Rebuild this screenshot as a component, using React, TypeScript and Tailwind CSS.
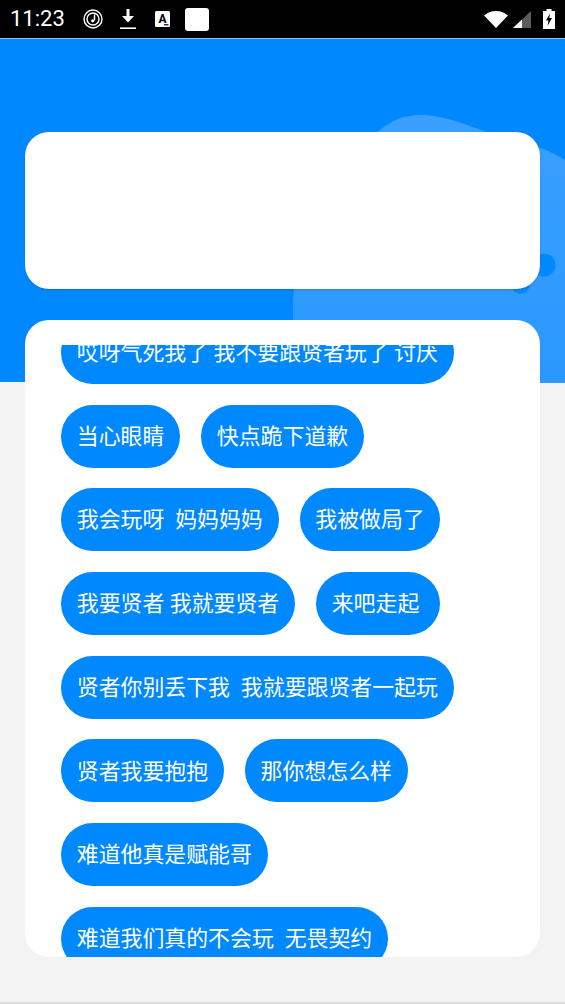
import React from 'react';

const chips = [
  '哎呀气死我了 我不要跟贤者玩了 讨厌',
  '当心眼睛',
  '快点跪下道歉',
  '我会玩呀  妈妈妈妈',
  '我被做局了',
  '我要贤者 我就要贤者',
  '来吧走起 ',
  '贤者你别丢下我  我就要跟贤者一起玩',
  '贤者我要抱抱',
  '那你想怎么样',
  '难道他真是赋能哥',
  '难道我们真的不会玩  无畏契约',
];

const StatusBar = () => (
  <div className="h-[38px] shrink-0 bg-black flex items-center text-white relative">
    <span className="ml-[10px] w-[54px] text-[22px] leading-none font-['Roboto',sans-serif]">11:23</span>
    <svg className="ml-[19px]" width="20" height="20" viewBox="0 0 20 20" fill="none" stroke="white">
      <circle cx="10" cy="10" r="9" strokeWidth="1.4" />
      <circle cx="10" cy="10" r="6" strokeWidth="1.4" />
      <path d="M11.5 5.5v6" strokeWidth="1.5" />
      <circle cx="9.7" cy="11.8" r="1.6" fill="white" stroke="none" />
    </svg>
    <svg className="ml-[17px]" width="16" height="20" viewBox="0 0 16 20" fill="white">
      <path d="M6.5 0h3v7H14l-6 6.5L2 7h4.500z" />
      <rect x="0" y="18.400" width="16" height="1.600" />
    </svg>
    <svg className="ml-[19px]" width="15" height="16" viewBox="0 0 15 16">
      <rect width="15" height="16" rx="1.500" fill="white" />
      <text x="7.500" y="11.500" textAnchor="middle" fontSize="12" fontWeight="700" fontFamily="Roboto, sans-serif" fill="black">A</text>
      <rect x="9" y="13.200" width="4.500" height="1.200" fill="black" />
    </svg>
    <div className="ml-[15px] w-[24px] h-[23px] bg-white rounded-[3px]"></div>
    <div className="ml-auto flex items-center mr-[10px]">
      <svg width="24" height="17" viewBox="0 0 24 17" fill="white">
        <path d="M0 4.600C3 1.800 7.200 0 12 0s9 1.800 12 4.600L12 17z" />
      </svg>
      <svg className="ml-[5px]" width="18" height="17" viewBox="0 0 18 17">
        <path d="M18 0v17H0z" fill="#5c5c5c" />
        <path d="M9 8.500V17H0z" fill="white" />
      </svg>
      <svg className="ml-[12px]" width="12" height="20" viewBox="0 0 12 20">
        <path d="M3.500 0h5v2H12v18H0V2h3.500z" fill="white" />
        <path d="M7 4.500L3 11.500h2.500L4.500 17 9 9H6.300z" fill="black" />
      </svg>
    </div>
  </div>
);

// decorative blob behind the top card, coordinates are page pixels
const Blob = () => (
  <svg className="absolute left-0 top-0" width="565" height="344" viewBox="0 39 565 344">
    <defs>
      <linearGradient id="blobFill" x1="0" y1="0" x2="0" y2="1">
        <stop offset="0" stopColor="#3a9fff" />
        <stop offset="1" stopColor="#2a98ff" />
      </linearGradient>
    </defs>
    <path
      d="M293 383V305C293 240 340 160 380 130C392 120 405 115 420 115C440 115 460 122 487 132C505 139 520 142 540 148C550 151 558 156 565 160V383Z"
      fill="url(#blobFill)"
    />
    <circle cx="544" cy="265" r="11.500" fill="#0088ff" />
    <circle cx="520.500" cy="285" r="9" fill="#0088ff" />
  </svg>
);

export default function App() {
  return (
    <div className="w-[565px] h-[1004px] flex flex-col overflow-hidden bg-[#f3f3f3] border-b-2 border-[#dcdcdc] font-['Roboto','Noto_Sans_CJK_SC',sans-serif]">
      <StatusBar />
      <div className="h-[344px] shrink-0 bg-[#0088ff] border-t border-[#8cc4f5] relative px-[25px] pt-[93px]">
        <Blob />
        <div className="relative h-[157px] bg-white rounded-[24px] shadow-[0_1px_2px_rgba(0,0,0,0.15)]"></div>
      </div>
      <div className="relative mx-[25px] -mt-[62px] h-[637px] bg-white rounded-[24px] pt-[25px] overflow-hidden">
        <div className="h-full overflow-hidden px-[36px]">
          <div className="-mt-[24px] flex flex-wrap gap-x-[21px] gap-y-[20.7px]">
            {chips.map((chip) => (
              <div
                key={chip}
                className="h-[63px] px-[15.75px] pt-[2px] flex items-center rounded-full bg-[#0088ff] text-white text-[21.9px] whitespace-pre"
              >
                {chip}
              </div>
            ))}
          </div>
        </div>
      </div>
    </div>
  );
}
